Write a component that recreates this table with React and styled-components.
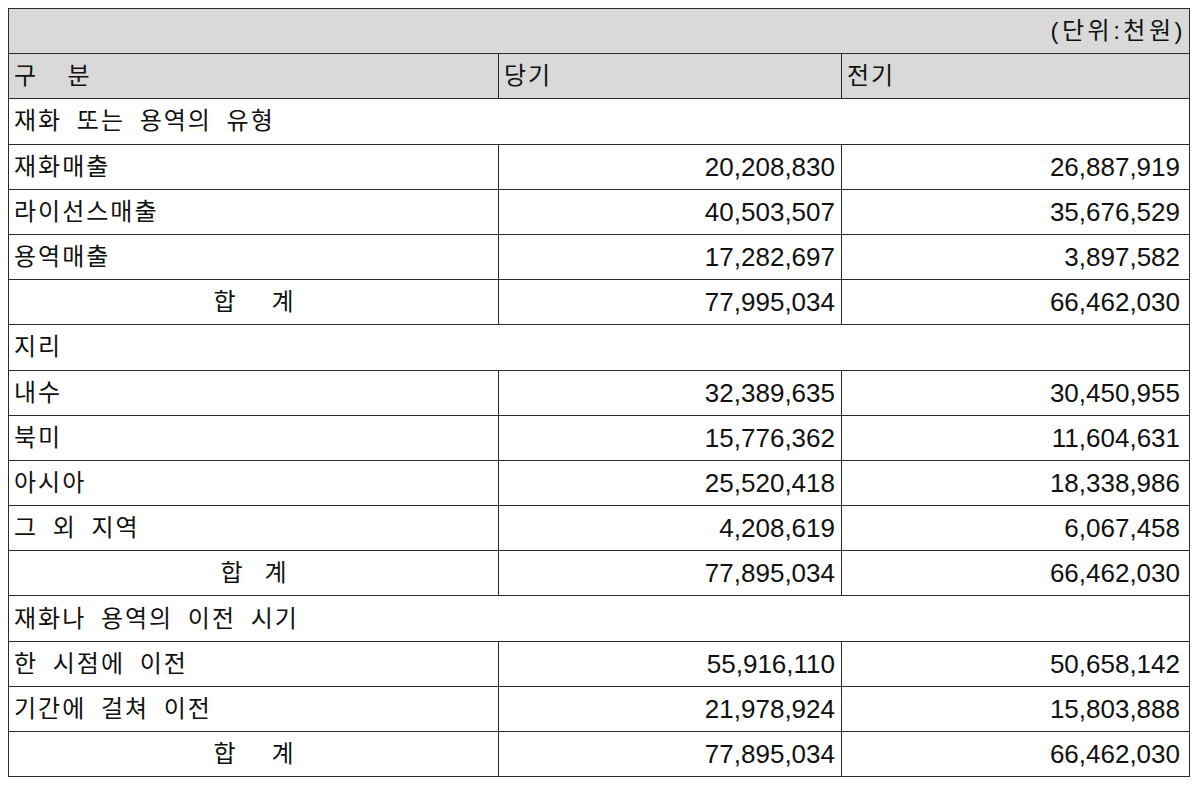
import React from "react";
import styled, { createGlobalStyle } from "styled-components";

const GlobalStyle = createGlobalStyle`
  body {
    margin: 8px;
    background: #ffffff;
    font-family: "Noto Sans CJK KR", "Liberation Sans", sans-serif;
    color: #111;
  }
`;

const Table = styled.table`
  width: 1181px;
  border-collapse: collapse;
  table-layout: fixed;
  font-family: "Liberation Sans", "Noto Sans CJK KR", sans-serif;
  font-size: 24px;
`;

const Row = styled.tr`
  height: 45.2px;
  background: ${(p) => (p.$head ? "#d9d9d9" : "#ffffff")};
`;

const Cell = styled.td`
  border: 1px solid #2a2a2a;
  padding: 0 ${(p) => p.$pr || 5}px 0 5px;
  text-align: ${(p) => p.$align || "left"};
  vertical-align: middle;
  white-space: pre;
  letter-spacing: ${(p) => (p.$num ? "0" : "2px")};
  word-spacing: 6px;
  font-size: ${(p) => (p.$num ? "26px" : "24px")};
  line-height: 1;
`;

const Unit = styled(Cell)`
  letter-spacing: 3.5px;
  padding-right: 3px;
`;

const Total = styled.span`
  display: inline-flex;
  gap: ${(p) => p.$gap}px;
  letter-spacing: 0;
`;

const sections = [
  {
    title: "재화 또는 용역의 유형",
    rows: [
      ["재화매출", "20,208,830", "26,887,919"],
      ["라이선스매출", "40,503,507", "35,676,529"],
      ["용역매출", "17,282,697", "3,897,582"],
    ],
    total: [36, "77,995,034", "66,462,030"],
  },
  {
    title: "지리",
    rows: [
      ["내수", "32,389,635", "30,450,955"],
      ["북미", "15,776,362", "11,604,631"],
      ["아시아", "25,520,418", "18,338,986"],
      ["그 외 지역", "4,208,619", "6,067,458"],
    ],
    total: [22, "77,895,034", "66,462,030"],
  },
  {
    title: "재화나 용역의 이전 시기",
    rows: [
      ["한 시점에 이전", "55,916,110", "50,658,142"],
      ["기간에 걸쳐 이전", "21,978,924", "15,803,888"],
    ],
    total: [36, "77,895,034", "66,462,030"],
  },
];

function DataRow({ label, cur, prev, center }) {
  return (
    <Row>
      <Cell $align={center ? "center" : "left"}>{label}</Cell>
      <Cell $num $align="right" $pr={6}>{cur}</Cell>
      <Cell $num $align="right" $pr={9}>{prev}</Cell>
    </Row>
  );
}

export default function App() {
  return (
    <>
      <GlobalStyle />
      <Table>
        <colgroup>
          <col style={{ width: 490 }} />
          <col style={{ width: 343 }} />
          <col style={{ width: 348 }} />
        </colgroup>
        <tbody>
          <Row $head>
            <Unit colSpan={3} $align="right">(단위:천원)</Unit>
          </Row>
          <Row $head>
            <Cell>{"구  분"}</Cell>
            <Cell>당기</Cell>
            <Cell>전기</Cell>
          </Row>
          {sections.map((s) => (
            <React.Fragment key={s.title}>
              <Row>
                <Cell colSpan={3}>{s.title}</Cell>
              </Row>
              {s.rows.map((r) => (
                <DataRow key={r[0]} label={r[0]} cur={r[1]} prev={r[2]} />
              ))}
              <DataRow
                center
                label={
                  <Total $gap={s.total[0]}>
                    <span>합</span>
                    <span>계</span>
                  </Total>
                }
                cur={s.total[1]}
                prev={s.total[2]}
              />
            </React.Fragment>
          ))}
        </tbody>
      </Table>
    </>
  );
}
